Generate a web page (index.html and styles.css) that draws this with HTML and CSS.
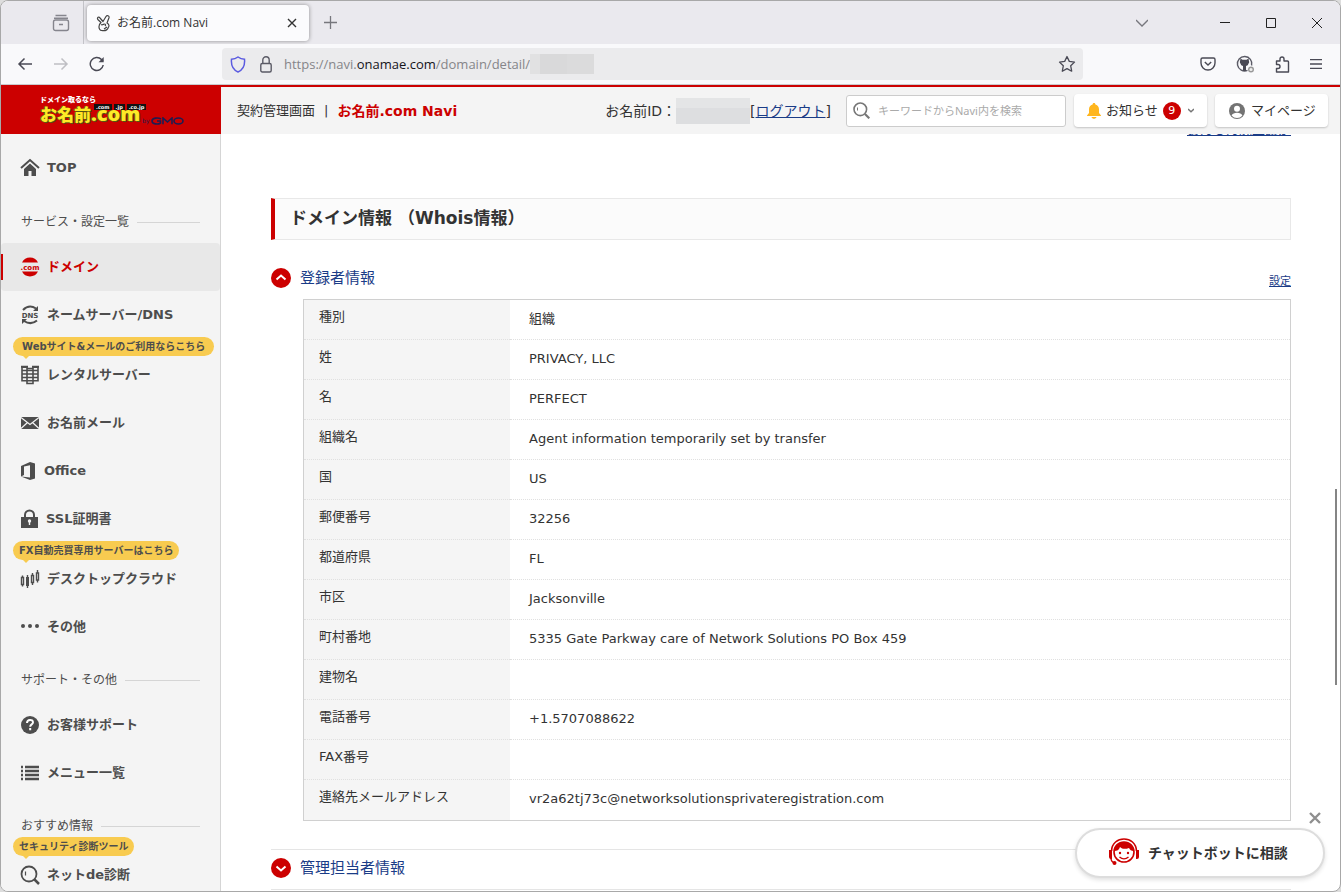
FILE: index.html
```html
<!doctype html>
<html lang="ja">
<head>
<meta charset="utf-8">
<title>お名前.com Navi</title>
<link rel="stylesheet" href="styles.css">
</head>

<body>
<div class="window">

<!-- browser tabs -->
<div class="tabbar">
  <button class="recent" aria-label="Firefox View"><svg width="18" height="18" viewBox="0 0 18 18" fill="none" stroke="#85858d" stroke-width="1.4"><path d="M3.5 1.5h11M2 4.2h14"/><rect x="1.5" y="6" width="15" height="10.5" rx="2"/><path d="M7 10.5h4"/></svg></button>
  <div class="tab">
    <svg width="16" height="18" viewBox="0 0 16 18" fill="none" stroke="#444" stroke-width="1.2" stroke-linejoin="round"><path d="M5 8.500L1.800 5.500C.8 3.500 2.800 2.300 4 4l3 3.500L10 2.500c1-1.500 3.500-.8 3 1.200L11 9c2 1 2.500 3 1.300 4.500-1 3-4 3.500-6.800 3C2.500 16 2 11 5 8.500z"/><path d="M5 10.500c1.500 1 2.500-.5 3.500-.500s1.500 1 .5 2M8 15l3-2"/></svg>
    <span>お名前.com Navi</span>
    <button aria-label="Close tab"><svg width="10" height="10" viewBox="0 0 10 10" stroke="#333" stroke-width="1.400"><path d="M1 1l8 8M9 1L1 9"/></svg></button>
  </div>
  <button class="newtab" aria-label="New tab"><svg width="13" height="13" viewBox="0 0 13 13" stroke="#77777d" stroke-width="1.300"><path d="M6.500 0v13M0 6.500h13"/></svg></button>
  <div class="winbuttons">
    <button aria-label="List tabs"><svg width="12" height="12" viewBox="0 0 12 12" fill="none" stroke="#77777d" stroke-width="1.300"><path d="M0 3l6 6 6-6"/></svg></button>
    <button aria-label="Minimize"><svg width="10" height="10" viewBox="0 0 10 10" stroke="#222"><path d="M0 4.500h10"/></svg></button>
    <button aria-label="Maximize"><svg width="10" height="10" viewBox="0 0 10 10" fill="none" stroke="#222"><path d="M.5.5h9v9h-9z"/></svg></button>
    <button aria-label="Close"><svg width="10" height="10" viewBox="0 0 10 10" stroke="#222"><path d="M0 0l10 10M10 0L0 10"/></svg></button>
  </div>
</div>

<!-- address bar -->
<div class="toolbar">
  <div class="nav">
    <button aria-label="Back"><svg width="16" height="14" viewBox="0 0 16 14" fill="none" stroke="#4a4a55" stroke-width="1.500"><path d="M15 7H2M7.500 1.500L2 7l5.500 5.500"/></svg></button>
    <button aria-label="Forward"><svg width="16" height="14" viewBox="0 0 16 14" fill="none" stroke="#bfbfc4" stroke-width="1.500"><path d="M1 7h13M8.500 1.500L14 7l-5.500 5.500"/></svg></button>
    <button aria-label="Reload"><svg width="16" height="16" viewBox="0 0 16 16" fill="none" stroke="#4a4a55" stroke-width="1.500"><path d="M14.200 9A6.500 6.500 0 1 1 12.500 3.500L14 5"/><path d="M9.500 6.200h5.200V1z" fill="#4a4a55" stroke="none"/></svg></button>
  </div>
  <div class="urlbar">
    <svg width="16" height="17" viewBox="0 0 16 17" fill="none" stroke="#5b5be0" stroke-width="1.500"><path d="M8 1C6 2.500 3.500 3.200 1.500 3.200c-.5 5 1 10.500 6.500 12.800 5.500-2.300 7-7.800 6.500-12.800C12.500 3.200 10 2.500 8 1z"/></svg>
    <svg width="12" height="17" viewBox="0 0 12 17" fill="none" stroke="#5b5b66" stroke-width="1.400"><rect x=".8" y="7.500" width="10.400" height="8.500" rx="1.500"/><path d="M2.800 7.500V4a3.200 3.200 0 0 1 6.400 0v3.500"/></svg>
    <span class="url">https://navi.<b>onamae.com</b>/domain/detail/</span><span class="mask mask-url"></span>
    <button class="star" aria-label="Bookmark"><svg width="18" height="18" viewBox="0 0 18 18" fill="none" stroke="#4a4a55" stroke-width="1.300" stroke-linejoin="round"><path d="M9 1.500l2.300 4.900 5.200.7-3.800 3.700 1 5.400L9 13.600l-4.700 2.600 1-5.400L1.500 7.100l5.200-.7z"/></svg></button>
  </div>
  <div class="tools">
    <button aria-label="Pocket"><svg width="16" height="14" viewBox="0 0 16 14" fill="none" stroke="#4a4a55" stroke-width="1.400"><path d="M2.500 1h11a1.500 1.500 0 0 1 1.500 1.500V6A7 7 0 0 1 1 6V2.500A1.500 1.500 0 0 1 2.500 1z"/><path d="M4.800 5L8 8l3.200-3"/></svg></button>
    <button aria-label="Extension"><svg width="18" height="18" viewBox="0 0 18 18" fill="none" stroke="#5b5b66" stroke-width="1.400"><path d="M11.500 15.300A7.200 7.200 0 1 1 15.600 10.500"/><path d="M4.500 3.500l2 1.200h4l2-1.200.7 3.800-1.500 3-1.700.7v5H7v-5l-1.700-.7-1.500-3z" fill="#4a4a55" stroke="none"/><circle cx="15" cy="14.500" r="2.300" stroke="#999" fill="#eee"/></svg></button>
    <button aria-label="Extensions"><svg width="15" height="17" viewBox="0 0 15 17" fill="none" stroke="#4a4a55" stroke-width="1.400" stroke-linejoin="round"><path d="M1.500 5H5V3a2 2 0 0 1 4 0v2h3.500a1 1 0 0 1 1 1v10H1.500v-3.500H3a2 2 0 0 0 0-4H1.500z"/></svg></button>
    <button aria-label="Menu"><svg width="12" height="10" viewBox="0 0 12 10" stroke="#4a4a55" stroke-width="1.300"><path d="M0 .7h12M0 5h12M0 9.300h12"/></svg></button>
  </div>
</div>

<div class="page">

<header class="header">
  <a class="logo" href="#">
    <span class="logo-catch">ドメイン取るなら</span>
    <span class="logo-main">
      <span class="logo-name">お名前<span>.com</span></span><span class="logo-by">by</span><svg width="33" height="8" viewBox="0 0 33 8" fill="none" stroke="#1d1d52" stroke-width="1.600"><path d="M10 2C7 .3 1 .8 1 4s6 3.800 8.500 2V4H6M12 7.300V1l4.500 4L21 1v6.300"/><ellipse cx="27.500" cy="4" rx="4.500" ry="3"/></svg>
    </span>
    <span class="logo-tags"><i>.com</i><i>.jp</i><i>.co.jp</i></span>
  </a>
  <div class="headbar">
    <span class="crumb">契約管理画面</span><span class="bar">|</span><strong>お名前.com Navi</strong>
    <div class="account">お名前ID：<span class="mask mask-id"></span>[<a href="#">ログアウト</a>]</div>
    <label class="search">
      <svg width="17" height="17" viewBox="0 0 17 17" fill="none" stroke="#777" stroke-width="1.600"><circle cx="7.300" cy="7.300" r="6.300"/><path d="M12 12l4.300 4.300" stroke-width="2.200"/><path d="M4.500 5.500v3" stroke-width="1"/></svg>
      <input type="text" placeholder="キーワードからNavi内を検索" aria-label="Navi内を検索">
    </label>
    <button class="headbtn news"><svg width="14" height="16" viewBox="0 0 14 16" fill="#ffb61e"><path d="M7 0c1 0 1.400.7 1.400 1.500C11 2.200 12 4.200 12 6.500V10l2 2.500v.5H0v-.5L2 10V6.500c0-2.300 1-4.300 3.600-5C5.600.7 6 0 7 0zM4.500 14h5c-.5 2.400-4.500 2.400-5 0z"/></svg>お知らせ<span class="count">9</span><svg width="6" height="5" viewBox="0 0 6 5" fill="none" stroke="#777" stroke-width="1.500"><path d="M0 1l3 2.800L6 1"/></svg></button>
    <button class="headbtn mypage"><svg width="16" height="16" viewBox="0 0 16 16"><circle cx="8" cy="8" r="8" fill="#737373"/><circle cx="8" cy="5.800" r="3" fill="#fff"/><path d="M2.600 12.400C4 9 12 9 13.400 12.400A7 7 0 0 1 2.600 12.400z" fill="#fff"/></svg>マイページ</button>
  </div>
</header>

<div class="columns">
<nav class="side">
  <a class="item top" href="#"><svg width="20" height="20" viewBox="0 0 20 20"><path d="M1 10L10 2l9 8" fill="none" stroke="#4d4d4d" stroke-width="2"/><path d="M4 11l6-5.500 6 5.500v7h-4.500v-5h-3v5H4z" fill="#4d4d4d"/></svg>TOP</a>

  <h2>サービス・設定一覧</h2>
  <a class="item current" href="#"><svg width="20" height="20" viewBox="0 0 20 20"><path d="M2 5.500a9 9 0 0 1 16 0zM2 14.500a9 9 0 0 0 16 0z" fill="#c00"/><text x="10" y="12.500" text-anchor="middle" class="ico-text red">.com</text></svg>ドメイン</a>
  <a class="item" href="#"><svg width="20" height="20" viewBox="0 0 20 20"><path d="M3 5Q9-1 16 3.500M17 15.500q-6 5-13 .5" fill="none" stroke="#4d4d4d" stroke-width="2"/><path d="M18 1v5h-5zM2 19v-5h5z" fill="#4d4d4d"/><text x="10" y="13" text-anchor="middle" class="ico-text">DNS</text></svg>ネームサーバー/DNS</a>
  <a class="item tipped" href="#"><span class="tip wide">Webサイト&amp;メールのご利用ならこちら</span><svg width="20" height="20" viewBox="0 0 20 20" fill="none" stroke="#4d4d4d" stroke-width="1.600"><path d="M2 2.200h5v13.500H2zM7 3.500h6v15H7zM13 2.200h5v13.500h-5zM2 5.500h16M2 9h16M2 12.500h16M7 15.700h6"/><path d="M1 1.800h7M12 1.800h7" stroke-width="2"/></svg>レンタルサーバー</a>
  <a class="item" href="#"><svg width="20" height="20" viewBox="0 0 20 20"><path d="M1 4h18v12H1z" fill="#4d4d4d"/><path d="M1 4.500l9 7 9-7M1 15.500l6.500-6M19 15.500l-6.500-6" fill="none" stroke="#f4f4f4" stroke-width="1.200"/></svg>お名前メール</a>
  <a class="item office" href="#"><svg width="17" height="20" viewBox="0 0 17 20"><path d="M1 5l9-4 5 1.500v15L10 19l-9-3.500 9 1V4.200L4 5.500v8.500L1 15.500z" fill="#4d4d4d"/></svg>Office</a>
  <a class="item ssl" href="#"><svg width="19" height="20" viewBox="0 0 19 20"><path d="M5 8V6a4.500 4.500 0 0 1 9 0v2" fill="none" stroke="#4d4d4d" stroke-width="2"/><path d="M1 8h17v11H1z" fill="#4d4d4d"/><circle cx="9.500" cy="12" r="1.700" fill="#f4f4f4"/><path d="M8.800 12h1.400v4H8.800z" fill="#f4f4f4"/></svg>SSL証明書</a>
  <a class="item tipped" href="#"><span class="tip">FX自動売買専用サーバーはこちら</span><svg width="20" height="20" viewBox="0 0 20 20" fill="none" stroke="#4d4d4d" stroke-width="1.400"><path d="M1.500 8.500h2v7h-2zM11.500 6.500h2v7h-2zM16.500 4h2v7h-2zM2.500 6.500v2M2.500 15.500v2M12.500 4v2.500M12.500 13.500V16M17.500 1v3M17.500 11v2.500M7.500 6v13"/><path d="M6 8h3v9H6z" fill="#4d4d4d" stroke="none"/></svg>デスクトップクラウド</a>
  <a class="item" href="#"><svg width="20" height="20" viewBox="0 0 20 20" fill="#4d4d4d"><circle cx="3" cy="9" r="2"/><circle cx="10" cy="9" r="2"/><circle cx="17" cy="9" r="2"/></svg>その他</a>

  <h2>サポート・その他</h2>
  <a class="item" href="#"><svg width="20" height="20" viewBox="0 0 20 20"><circle cx="10" cy="10" r="9" fill="#4d4d4d"/><path d="M7 8c0-4 6-4 6-.8 0 2.300-2.800 2-2.800 4.500M10.200 13v2.200" fill="none" stroke="#fff" stroke-width="2"/></svg>お客様サポート</a>
  <a class="item" href="#"><svg width="20" height="20" viewBox="0 0 20 20" stroke="#4d4d4d" stroke-width="2.400"><path d="M1 4h2M5 4h14M1 8h2M5 8h14M1 12h2M5 12h14M1 16h2M5 16h14"/></svg>メニュー一覧</a>

  <h2>おすすめ情報</h2>
  <a class="item tipped" href="#"><span class="tip">セキュリティ診断ツール</span><svg width="20" height="20" viewBox="0 0 20 20" fill="none" stroke="#4d4d4d" stroke-width="1.800"><circle cx="9" cy="9" r="7.500"/><path d="M14.500 14.500L19 19" stroke-width="2.500"/><path d="M5.500 6.500v4" stroke-width="1.200"/></svg>ネットde診断</a>
</nav>

<main class="main">
  <div class="prev"><a href="#">あんしん廃止設定</a></div>

  <h1>ドメイン情報 （Whois情報）</h1>

  <div class="acc">
    <button class="acc-head"><svg width="20" height="20" viewBox="0 0 20 20"><circle cx="10" cy="10" r="10" fill="#c00"/><path d="M5.500 11.500L10 7.500l4.500 4" fill="none" stroke="#fff" stroke-width="2"/></svg>登録者情報</button>
    <a href="#">設定</a>
  </div>
  <table>
    <tr><th>種別</th><td>組織</td></tr>
    <tr><th>姓</th><td>PRIVACY, LLC</td></tr>
    <tr><th>名</th><td>PERFECT</td></tr>
    <tr><th>組織名</th><td>Agent information temporarily set by transfer</td></tr>
    <tr><th>国</th><td>US</td></tr>
    <tr><th>郵便番号</th><td>32256</td></tr>
    <tr><th>都道府県</th><td>FL</td></tr>
    <tr><th>市区</th><td>Jacksonville</td></tr>
    <tr><th>町村番地</th><td>5335 Gate Parkway care of Network Solutions PO Box 459</td></tr>
    <tr><th>建物名</th><td></td></tr>
    <tr><th>電話番号</th><td>+1.5707088622</td></tr>
    <tr><th>FAX番号</th><td></td></tr>
    <tr><th>連絡先メールアドレス</th><td>vr2a62tj73c@networksolutionsprivateregistration.com</td></tr>
  </table>
  <div class="acc closed">
    <button class="acc-head"><svg width="20" height="20" viewBox="0 0 20 20"><circle cx="10" cy="10" r="10" fill="#c00"/><path d="M5.500 8.500l4.500 4 4.500-4" fill="none" stroke="#fff" stroke-width="2"/></svg>管理担当者情報</button>
  </div>
</main>
</div>

</div>

<div class="scrollbar"></div>
<div class="chat">
  <button class="chat-close" aria-label="閉じる"><svg width="12" height="12" viewBox="0 0 12 12" stroke="#8f8f8f" stroke-width="2.400"><path d="M1 1l10 10M11 1L1 11"/></svg></button>
  <button class="chat-open"><svg width="32" height="28" viewBox="0 0 32 28"><path d="M3.500 13C4-3 28-3 28.500 13" fill="none" stroke="#c00" stroke-width="1.600"/><path d="M1 12h3v9H3a2 2 0 0 1-2-2zM28 12h3v7a2 2 0 0 1-2 2h-1z" fill="#c00"/><circle cx="16" cy="14" r="10" fill="#fff" stroke="#c00" stroke-width="1.600"/><path d="M6 13C7 1 25 1 26 13c-3 0-4-1-5-3-4 1.500-7 1-9-1-1 3-3 4-6 4z" fill="#c00"/><circle cx="12" cy="15" r="1.200" fill="#c00"/><circle cx="20" cy="15" r="1.200" fill="#c00"/><path d="M11.500 19c3 2.500 6 2.500 9 0M3 20c0 3 1.500 4.500 4 5" fill="none" stroke="#c00" stroke-width="1.400"/><circle cx="6.500" cy="25" r="2" fill="#c00"/></svg>チャットボットに相談</button>
</div>

</div>
</body>
</html>
```
FILE: styles.css
```css
* {
	box-sizing: border-box;
}
body {
	margin: 0;
	background: #ddd;
	color: #333;
	font: 13px/20px "DejaVu Sans", "Noto Sans CJK JP", sans-serif;
}
button {
	border: 0;
	padding: 0;
	background: none;
	color: inherit;
	font: inherit;
	white-space: nowrap;
}
svg {
	flex: none;
	display: block;
}
a {
	color: #1a3c87;
}
.window {
	position: relative;
	display: flex;
	flex-direction: column;
	height: 100vh;
	overflow: hidden;
	border: 1px solid #a8a8a8;
	border-radius: 8px;
	background: #fff;
}

/* browser */
.tabbar {
	display: flex;
	align-items: center;
	flex: none;
	height: 43px;
	background: #eae9ee;
}
.recent {
	display: flex;
	align-items: center;
	justify-content: flex-end;
	width: 83px;
	height: 43px;
	padding-right: 13px;
	border-right: 1px solid #c3c3c8;
}
.tab {
	display: flex;
	align-items: center;
	width: 222px;
	height: 36px;
	margin-left: 3px;
	padding: 0 12px 0 9px;
	border-radius: 4px;
	background: #fbfbfd;
	box-shadow: 0 0 4px rgba(0,0,0,.4);
	font: 12px/20px "Open Sans", "Noto Sans CJK JP", sans-serif;
}
.tab span {
	flex: 1;
	margin-left: 5px;
}
.newtab {
	margin-left: 15px;
}
.winbuttons {
	display: flex;
	gap: 36px;
	margin-left: auto;
	padding-right: 18px;
}
.winbuttons button:first-child {
	margin-right: 36px;
}
.toolbar {
	display: flex;
	align-items: center;
	flex: none;
	height: 41px;
	background: #f9f9fb;
	border-bottom: 1px solid #cacacd;
}
.nav {
	display: flex;
	align-items: center;
	gap: 20px;
	width: 221px;
	padding-left: 16px;
}
.urlbar {
	display: flex;
	align-items: center;
	flex: 1;
	height: 32px;
	padding: 0 7px 0 8px;
	border-radius: 4px;
	background: #ebebed;
	color: #858589;
	font: 13px/20px "Open Sans", sans-serif;
}
.urlbar svg + svg {
	margin: 0 12px 0 14px;
}
.urlbar b {
	font-weight: normal;
	color: #15141a;
}
.star {
	margin-left: auto;
}
.tools {
	display: flex;
	align-items: center;
	justify-content: space-between;
	width: 257px;
	padding: 0 18px 0 117px;
}
.mask {
	display: inline-block;
	background: linear-gradient(90deg, #e1e1e2 16%, #d9d9da 16%, #d9d9da 58%, #dbdbdc 58%);
}
.mask-url {
	width: 64px;
	height: 20px;
}
.mask-id {
	width: 74px;
	height: 26px;
	background: linear-gradient(#e4e5e6 40%, #dddee0 40%);
}

/* page header */
.page {
	display: flex;
	flex-direction: column;
	flex: 1;
	min-height: 0;
	border-top: 2px solid #c00;
}
.header {
	display: flex;
	flex: none;
	height: 47px;
}
.logo {
	position: relative;
	width: 220px;
	padding: 8px 0 0 39px;
	background: #c00;
	color: #fff;
	text-decoration: none;
}
.logo-catch {
	display: block;
	font-size: 7px;
	line-height: 10px;
	font-weight: 900;
}
.logo-main {
	display: flex;
	align-items: flex-end;
	height: 20px;
}
.logo-name {
	color: #ffe926;
	font: 900 17px/20px "Open Sans", "Noto Sans CJK JP", sans-serif;
	text-shadow: 1px 1px 0 #551, -1px 0 0 #551;
}
.logo-name span {
	font-size: 20px;
}
.logo-by {
	margin: 0 1px 0 2px;
	color: #1d1d52;
	font-size: 6px;
	line-height: 8px;
}
.logo-tags {
	position: absolute;
	top: 17px;
	left: 93px;
	display: flex;
	gap: 2px;
}
.logo-tags i {
	padding: 0 2px;
	background: #111;
	font: bold 5px/6px "DejaVu Sans", sans-serif;
}
.headbar {
	display: flex;
	align-items: center;
	flex: 1;
	padding: 0 12px 0 16px;
	background: #f4f4f4;
}
.headbar .bar {
	margin: 0 9px;
}
.headbar strong {
	color: #c00;
	font-size: 14px;
}
.account {
	display: flex;
	align-items: center;
	margin-left: auto;
	font-size: 14px;
}
.search {
	display: flex;
	align-items: center;
	width: 220px;
	height: 32px;
	margin: 0 8px 0 15px;
	padding-left: 6px;
	border: 1px solid #ccc;
	border-radius: 3px;
	background: #fff;
}
.search input {
	flex: 1;
	min-width: 0;
	margin-left: 8px;
	padding: 0;
	border: 0;
	outline: 0;
	background: none;
	font: 11px/20px "Noto Sans", "Noto Sans CJK JP", sans-serif;
}
.search input::placeholder {
	color: #aaa;
}
.headbtn {
	display: flex;
	align-items: center;
	height: 33px;
	border-radius: 4px;
	background: #fff;
	box-shadow: 0 1px 2px rgba(0,0,0,.2);
}
.news {
	width: 133px;
	margin-right: 8px;
	padding-left: 13px;
	gap: 5px;
}
.mypage {
	width: 113px;
	padding-left: 14px;
	gap: 6px;
}
.count {
	width: 18px;
	height: 18px;
	border-radius: 50%;
	background: #c00;
	color: #fff;
	font-size: 11px;
	line-height: 18px;
}
.news .count + svg {
	margin-left: 2px;
}

/* side menu */
.columns {
	display: flex;
	flex: 1;
	min-height: 0;
	overflow: hidden;
}
.side {
	flex: none;
	width: 220px;
	border-right: 1px solid #d5d5d5;
	background: #f4f4f4;
	color: #4d4d4d;
}
.side h2 {
	display: flex;
	align-items: center;
	height: 20px;
	margin: 19px 20px 11px;
	font-size: 12px;
	font-weight: normal;
}
.side h2::after {
	content: "";
	flex: 1;
	height: 1px;
	margin-left: 8px;
	background: #d5d5d5;
}
.item {
	position: relative;
	display: flex;
	align-items: center;
	gap: 7px;
	height: 48px;
	padding-left: 19px;
	color: #4d4d4d;
	font-weight: bold;
	text-decoration: none;
}
.top {
	margin: 10px 0 20px;
}
.current {
	border-radius: 4px;
	background: #e8e8e8;
	color: #c00;
}
.current::before {
	content: "";
	position: absolute;
	left: 0;
	width: 2px;
	height: 26px;
	background: #c00;
}
.tipped {
	margin-top: 12px;
}
h2 + .tipped {
	margin-top: 15px;
}
.tip {
	position: absolute;
	top: -14px;
	left: 12px;
	height: 19px;
	padding: 0 6px;
	border-radius: 10px;
	background: #f8cb50;
	font-size: 10px;
	line-height: 19px;
	white-space: nowrap;
}
.wide {
	padding: 0 9px;
}
.tip::after {
	content: "";
	position: absolute;
	top: 19px;
	left: 10px;
	border: 3px solid transparent;
	border-top-color: #f8cb50;
}
.ico-text {
	fill: #4d4d4d;
	font: bold 7px "DejaVu Sans", sans-serif;
}
.red {
	fill: #c00;
}

/* whois */
.main {
	flex: 1;
	min-width: 0;
	padding: 0 49px 0 50px;
}
.prev {
	display: flow-root;
	height: 64px;
	text-align: right;
}
.prev a {
	display: block;
	margin-top: -14px;
}
h1 {
	height: 42px;
	margin: 0 0 28px;
	padding-left: 15px;
	border: 1px solid #e8e8e8;
	border-left: 4px solid #c00;
	background: #fbfbfb;
	font-size: 17px;
	line-height: 38px;
}
.acc {
	display: flex;
	align-items: center;
	justify-content: space-between;
	height: 20px;
	margin-bottom: 11px;
}
.acc a {
	margin-top: 8px;
	font-size: 11px;
}
.acc-head {
	display: flex;
	align-items: center;
	gap: 9px;
	color: #1a3c87;
	font-size: 15px;
}
table {
	width: calc(100% - 32px);
	margin-left: 32px;
	border: 1px solid #d0d0d0;
	border-spacing: 0;
}
th, td {
	height: 40px;
	border-bottom: 1px dotted #e0e0e0;
	text-align: left;
	vertical-align: top;
	font-weight: normal;
}
th {
	width: 206px;
	padding: 7px 15px;
	background: #f5f5f5;
}
td {
	padding: 9px 19px;
}
tr:last-child th, tr:last-child td {
	border-bottom: 0;
}
.closed {
	height: 41px;
	margin: 28px 0 0;
	padding-bottom: 4px;
	border: solid #e5e5e5;
	border-width: 1px 0;
}

/* overlays */
.scrollbar {
	position: absolute;
	top: 488px;
	right: 3px;
	width: 2px;
	height: 196px;
	background: #858585;
}
.chat {
	position: absolute;
	right: 15px;
	bottom: 13px;
	display: flex;
	flex-direction: column;
	align-items: flex-end;
}
.chat-close {
	margin: 0 4px 4px;
}
.chat-open {
	display: flex;
	align-items: center;
	gap: 8px;
	width: 250px;
	height: 50px;
	padding: 0 0 3px 31px;
	border: 2px solid #ddd;
	border-radius: 25px;
	background: #fff;
	box-shadow: 0 2px 4px rgba(0,0,0,.12);
	font: bold 14px/20px "Noto Sans CJK JP", sans-serif;
}
```
